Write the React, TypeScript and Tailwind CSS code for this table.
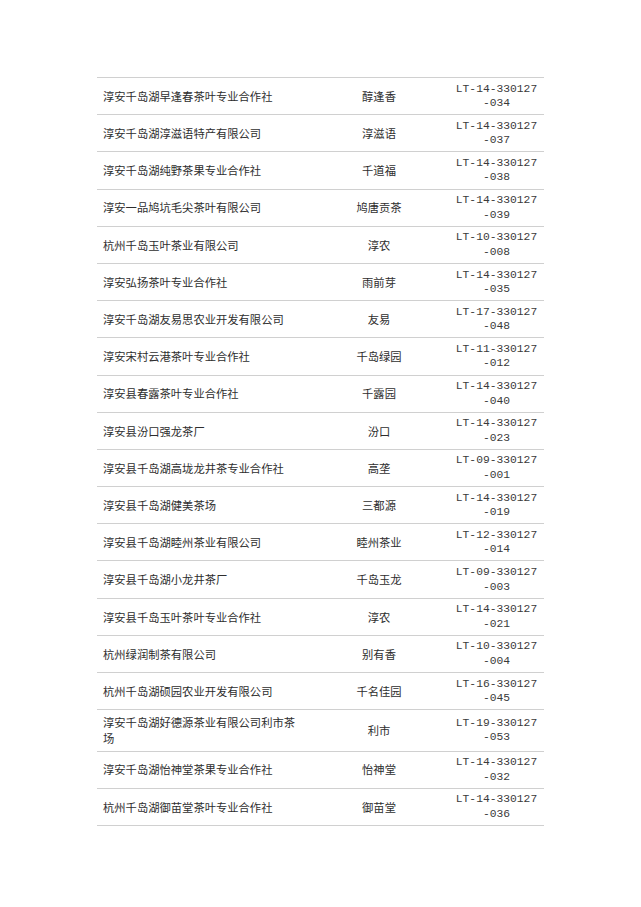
const rows: [string, string, string, string][] = [
  ["淳安千岛湖早逢春茶叶专业合作社", "醇逢香", "LT-14-330127", "-034"],
  ["淳安千岛湖淳滋语特产有限公司", "淳滋语", "LT-14-330127", "-037"],
  ["淳安千岛湖纯野茶果专业合作社", "千道福", "LT-14-330127", "-038"],
  ["淳安一品鸠坑毛尖茶叶有限公司", "鸠唐贡茶", "LT-14-330127", "-039"],
  ["杭州千岛玉叶茶业有限公司", "淳农", "LT-10-330127", "-008"],
  ["淳安弘扬茶叶专业合作社", "雨前芽", "LT-14-330127", "-035"],
  ["淳安千岛湖友易思农业开发有限公司", "友易", "LT-17-330127", "-048"],
  ["淳安宋村云港茶叶专业合作社", "千岛绿园", "LT-11-330127", "-012"],
  ["淳安县春露茶叶专业合作社", "千露园", "LT-14-330127", "-040"],
  ["淳安县汾口强龙茶厂", "汾口", "LT-14-330127", "-023"],
  ["淳安县千岛湖高垅龙井茶专业合作社", "高垄", "LT-09-330127", "-001"],
  ["淳安县千岛湖健美茶场", "三都源", "LT-14-330127", "-019"],
  ["淳安县千岛湖睦州茶业有限公司", "睦州茶业", "LT-12-330127", "-014"],
  ["淳安县千岛湖小龙井茶厂", "千岛玉龙", "LT-09-330127", "-003"],
  ["淳安县千岛玉叶茶叶专业合作社", "淳农", "LT-14-330127", "-021"],
  ["杭州绿润制茶有限公司", "别有香", "LT-10-330127", "-004"],
  ["杭州千岛湖硕园农业开发有限公司", "千名佳园", "LT-16-330127", "-045"],
  ["淳安千岛湖好德源茶业有限公司利市茶场", "利市", "LT-19-330127", "-053"],
  ["淳安千岛湖怡神堂茶果专业合作社", "怡神堂", "LT-14-330127", "-032"],
  ["杭州千岛湖御苗堂茶叶专业合作社", "御苗堂", "LT-14-330127", "-036"],
]

const cjk = { fontFamily: '"Noto Sans CJK SC", "Noto Sans", sans-serif' }
const mono = { fontFamily: '"Liberation Mono", monospace' }

export default function App() {
  return (
    <div className="w-[641px] h-[907px] bg-white">
      <div className="pt-[77px] pl-[97px]">
        <div className="w-[447px] border-t border-[#d0d0d0]">
          {rows.map(([name, brand, code1, code2]) => (
            <div
              key={code1 + code2}
              className="flex items-center min-h-[37.2px] border-b border-[#d0d0d0]"
            >
              <div
                className="w-[212px] pl-[6px] pr-[8px] py-[3.8px] text-[11.3px] leading-[16.4px] text-[#2e2e2e]"
                style={cjk}
              >
                {name}
              </div>
              <div
                className="w-[140px] text-center text-[11.3px] leading-[16.4px] text-[#2e2e2e]"
                style={cjk}
              >
                {brand}
              </div>
              <div
                className="w-[95px] text-center text-[11.3px] leading-[14.5px] text-[#3a3a3a]"
                style={mono}
              >
                <div>{code1}</div>
                <div>{code2}</div>
              </div>
            </div>
          ))}
        </div>
      </div>
    </div>
  )
}
